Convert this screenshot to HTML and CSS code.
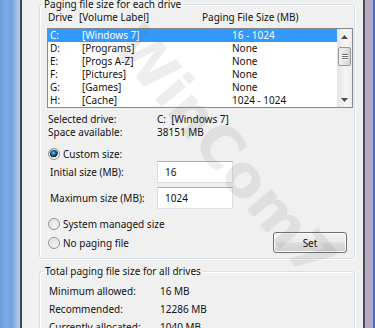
FILE: index.html
```html
<!DOCTYPE html>
<html lang="en">
<head>
<meta charset="utf-8">
<title>Virtual Memory</title>
<link rel="stylesheet" href="styles.css">
</head>
<body>
<div class="screen">
  <div class="frame-left"></div>
  <div class="dialog">
    <fieldset class="group group-drives">
      <legend>Paging file size for each drive</legend>
      <div class="list-head">
        <span class="h-drive">Drive</span><span class="h-label">[Volume Label]</span><span>Paging File Size (MB)</span>
      </div>
      <div class="listbox">
        <ul class="rows">
          <li class="row selected"><span class="c-drive">C:</span><span class="c-label">[Windows 7]</span><span>16 - 1024</span></li>
          <li class="row"><span class="c-drive">D:</span><span class="c-label">[Programs]</span><span>None</span></li>
          <li class="row"><span class="c-drive">E:</span><span class="c-label">[Progs A-Z]</span><span>None</span></li>
          <li class="row"><span class="c-drive">F:</span><span class="c-label">[Pictures]</span><span>None</span></li>
          <li class="row"><span class="c-drive">G:</span><span class="c-label">[Games]</span><span>None</span></li>
          <li class="row"><span class="c-drive">H:</span><span class="c-label">[Cache]</span><span>1024 - 1024</span></li>
        </ul>
        <div class="scrollbar">
          <div class="sb-btn"><svg width="7" height="4" viewBox="0 0 7 4"><path d="M0 4 L3.5 0 L7 4 Z" fill="#4d4d4d"/></svg></div>
          <div class="sb-thumb"><span></span><span></span><span></span></div>
          <div class="sb-space"></div>
          <div class="sb-btn"><svg width="7" height="4" viewBox="0 0 7 4"><path d="M0 0 L7 0 L3.5 4 Z" fill="#4d4d4d"/></svg></div>
        </div>
      </div>
      <dl class="info">
        <div class="info-row"><dt>Selected drive:</dt><dd>C:&nbsp;&nbsp;[Windows 7]</dd></div>
        <div class="info-row"><dt>Space available:</dt><dd>38151 MB</dd></div>
      </dl>
      <div class="radio-row custom"><span class="radio checked"></span><span>Custom size:</span></div>
      <div class="field-row first"><span class="field-label">Initial size (MB):</span><input class="textbox" type="text" value="16" readonly></div>
      <div class="field-row"><span class="field-label">Maximum size (MB):</span><input class="textbox" type="text" value="1024" readonly></div>
      <div class="radio-row system"><span class="radio"></span><span>System managed size</span></div>
      <div class="radio-row last">
        <div class="radio-opt"><span class="radio"></span><span>No paging file</span></div>
        <button class="btn" type="button">Set</button>
      </div>
    </fieldset>
    <fieldset class="group group-total">
      <legend>Total paging file size for all drives</legend>
      <dl class="totals">
        <div class="total-row"><dt>Minimum allowed:</dt><dd>16 MB</dd></div>
        <div class="total-row"><dt>Recommended:</dt><dd>12286 MB</dd></div>
        <div class="total-row"><dt>Currently allocated:</dt><dd>1040 MB</dd></div>
      </dl>
    </fieldset>
  </div>
  <div class="frame-right"></div>
  <div class="watermark">WinCom7</div>
</div>
</body>
</html>
```

FILE: styles.css
```css
html, body {
  margin: 0;
  padding: 0;
  background: #f0f0f0;
}

.screen {
  position: relative;
  display: flex;
  width: 375px;
  height: 328px;
  overflow: hidden;
  font-family: "Noto Sans", "Open Sans", sans-serif;
  font-size: 10px;
  color: #111;
}

.frame-left {
  flex: none;
  width: 20px;
  background: linear-gradient(to right, #6a9bdc 0, #7fadea 6px, #6e9fe0 11px, #9bbbe6 16px, #b9cbe3 20px);
  border-right: 2px solid #3b4556;
}

.dialog {
  flex: none;
  width: 341px;
  box-sizing: border-box;
  padding: 0 8px 0 17px;
  background: #f0f0f0;
}

.frame-right {
  flex: none;
  width: 8px;
  background: #b4a9c6;
  border-left: 2px solid #4b4a55;
  border-right: 2px solid #3d70cb;
}

.group {
  margin: 0;
  padding: 0 1px 5px 7px;
  border: 1px solid #d5dfe5;
  border-radius: 3px;
  box-shadow: inset 1px 1px 0 #fff, 1px 1px 0 #fff;
  min-width: 0;
}

.group legend {
  padding: 0 2px;
  margin-left: -5px;
  line-height: 13px;
}

.group-drives {
  margin-top: -2px;
}

.group-total {
  margin-top: 6px;
}

.group-total legend {
  margin-left: -4px;
}

.list-head {
  display: flex;
  line-height: 13px;
  padding-left: 1px;
  white-space: nowrap;
}

.h-drive { width: 31px; }
.h-label { width: 123px; }

.listbox {
  display: flex;
  margin-top: 4px;
  height: 80px;
  box-sizing: border-box;
  border: 1px solid #828790;
  background: #fff;
}

.rows {
  flex: 1;
  list-style: none;
  margin: 0;
  padding: 0;
}

.row {
  display: flex;
  height: 13px;
  line-height: 13px;
  padding-left: 2px;
  white-space: nowrap;
}

.row.selected {
  background: #3399ff;
  color: #fff;
}

.c-drive { width: 32px; }
.c-label { width: 150px; }

.scrollbar {
  flex: none;
  width: 15px;
  display: flex;
  flex-direction: column;
  background: linear-gradient(to right, #e6e6e6, #f5f5f5 60%, #ededed);
}

.sb-btn {
  height: 15px;
  display: flex;
  align-items: center;
  justify-content: center;
}

.sb-thumb {
  margin: 3px 1px 0;
  height: 19px;
  box-sizing: border-box;
  border: 1px solid #979797;
  border-radius: 2px;
  background: linear-gradient(to right, #f1f1f1, #e4e4e4 50%, #d4d4d4);
  display: flex;
  flex-direction: column;
  align-items: center;
  justify-content: center;
  gap: 1px;
}

.sb-thumb span {
  width: 6px;
  height: 1px;
  background: #6c6c6c;
  box-shadow: 0 1px 0 #fff;
}

.sb-space { flex: 1; }

.info {
  margin: 5px 0 0;
}

.info-row, .total-row {
  display: flex;
  white-space: nowrap;
}

.info-row {
  line-height: 13px;
  padding-left: 1px;
}

.info dt, .totals dt { margin: 0; }
.info dd, .totals dd { margin: 0; }

.info-row dt { width: 109px; }

.radio-row {
  display: flex;
  align-items: center;
  height: 13px;
  white-space: nowrap;
}

.radio-row.custom { margin-top: 8px; }
.radio-row.system { margin-top: 8px; }

.radio-row.last {
  margin-top: 2px;
  height: 21px;
  justify-content: space-between;
}

.radio-opt {
  display: flex;
  align-items: center;
}

.radio {
  flex: none;
  width: 12px;
  height: 12px;
  box-sizing: border-box;
  border-radius: 50%;
  border: 1px solid #939393;
  background: radial-gradient(circle at 60% 65%, #f6f6f6 0, #e2e2e2 55%, #cfcfcf 100%);
  box-shadow: inset 0 0 0 1px #f4f4f4;
  margin: 0 3px 0 1px;
}

.radio.checked {
  background:
    radial-gradient(circle at 45% 40%, #8fd6ea 0, #2a86b0 1.5px, #0d4364 3px, #0e2c3e 4px, transparent 4.6px),
    radial-gradient(circle at 60% 65%, #f6f6f6 0, #e2e2e2 55%, #cfcfcf 100%);
}

.field-row {
  display: flex;
  align-items: center;
  height: 22px;
  padding-left: 3px;
  white-space: nowrap;
}

.field-row + .field-row { margin-top: 4px; }
.field-row.first { margin-top: 1px; }

.field-label { width: 107px; }

.textbox {
  width: 76px;
  height: 22px;
  box-sizing: border-box;
  margin: 0;
  padding: 0 0 0 7px;
  border: 1px solid #dadde4;
  border-top-color: #abadb3;
  background: #fff;
  font: inherit;
  color: #111;
  outline: none;
}

.btn {
  width: 74px;
  height: 21px;
  margin: 0 6px 0 0;
  padding: 0;
  border: 1px solid #707070;
  border-radius: 3px;
  background: linear-gradient(#f2f2f2 0%, #ebebeb 48%, #dddddd 52%, #cfcfcf 100%);
  box-shadow: inset 0 0 0 1px #fbfbfb;
  font: inherit;
  color: #111;
}

.totals {
  margin: 4px 0 0;
}

.total-row {
  line-height: 18px;
  padding-left: 2px;
}

.total-row dt { width: 111px; }

.watermark {
  position: absolute;
  left: 55px;
  top: 112px;
  width: 340px;
  line-height: 80px;
  text-align: center;
  font-family: "DejaVu Sans", sans-serif;
  font-weight: bold;
  font-size: 58px;
  color: rgba(110, 110, 110, 0.12);
  transform: rotate(50deg);
  pointer-events: none;
  white-space: nowrap;
}
```
